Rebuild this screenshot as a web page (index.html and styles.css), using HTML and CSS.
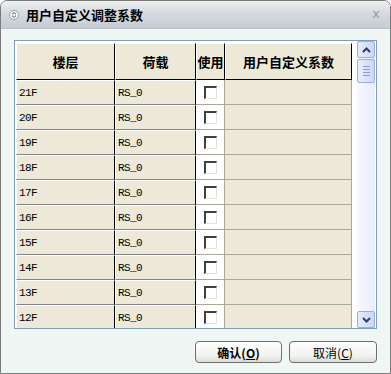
FILE: index.html
```html
<!DOCTYPE html>
<html lang="zh-CN">
<head>
    <meta charset="UTF-8">
    <title>用户自定义调整系数</title>
    <link rel="stylesheet" href="styles.css">
</head>
<body>
    <div class="dialog">
        <div class="title-bar">
            <svg class="title-icon" width="10" height="10" viewBox="0 0 10 10">
                <circle cx="5" cy="5" r="4.5" fill="#f4f6f8" stroke="#9aa2aa"/>
                <path d="M3 4.3 L5 2.5 L7 4.3 M3 5.7 L5 7.5 L7 5.7" fill="none" stroke="#555" stroke-width="1"/>
            </svg>
            <span class="title-text">用户自定义调整系数</span>
            <span class="close-btn">x</span>
        </div>

        <div class="content">
            <div class="grid-box">
                <div class="grid-scroll">
                    <div class="grid">
                        <div class="hd">楼层</div>
                        <div class="hd">荷载</div>
                        <div class="hd">使用</div>
                        <div class="hd">用户自定义系数</div>
                    </div>
                    <div class="grid rows" id="rows"></div>
                </div>
                <div class="scrollbar">
                    <div class="sb-btn">
                        <svg width="9" height="6" viewBox="0 0 9 6"><path d="M1 5 L4.5 1.5 L8 5" fill="none" stroke="#2b3f6e" stroke-width="2"/></svg>
                    </div>
                    <div class="sb-thumb">
                        <span></span><span></span><span></span><span></span>
                    </div>
                    <div class="sb-track"></div>
                    <div class="sb-btn">
                        <svg width="9" height="6" viewBox="0 0 9 6"><path d="M1 1 L4.5 4.5 L8 1" fill="none" stroke="#2b3f6e" stroke-width="2"/></svg>
                    </div>
                </div>
            </div>

            <div class="actions">
                <button class="btn btn-ok">确认(<u>O</u>)</button>
                <button class="btn">取消(<u>C</u>)</button>
            </div>
        </div>
    </div>

    <script>
        // floors 21F down to 12F
        const rows = document.getElementById('rows');
        for (let f = 21; f >= 12; f--) {
            rows.insertAdjacentHTML('beforeend',
                '<div class="cell c-floor">' + f + 'F</div>' +
                '<div class="cell c-load">RS_0</div>' +
                '<div class="cell c-use"><span class="check"></span></div>' +
                '<div class="cell c-coef"></div>');
        }
    </script>
</body>
</html>
```

FILE: styles.css
```css
body {
    margin: 0;
    font-family: "Noto Sans CJK SC", sans-serif;
    font-size: 12px;
    background: #ffffff;
}

.dialog {
    width: 391px;
    height: 374px;
    box-sizing: border-box;
    border: 1px solid #7c7c7c;
    border-radius: 7px 7px 0 0;
    background: #eff6f4;
    overflow: hidden;
}

.title-bar {
    height: 28px;
    display: flex;
    align-items: center;
    padding: 0 8px 0 8px;
    background: linear-gradient(#eef0f2, #d5dae0 45%, #c6ccd3);
    border-bottom: 1px solid #b9c0c7;
    box-sizing: border-box;
}

.title-icon {
    margin-right: 7px;
    margin-top: 1px;
}

.title-text {
    font-weight: bold;
    font-size: 13px;
    color: #000;
    flex: 1;
}

.close-btn {
    font-family: "DejaVu Sans", sans-serif;
    font-size: 13px;
    color: #9a9a9a;
    margin-right: 2px;
    margin-top: -2px;
}

.content {
    padding: 11px 13px 0 13px;
}

.grid-box {
    height: 289px;
    box-sizing: border-box;
    border: 1px solid #7f9db9;
    display: flex;
    background: #ffffff;
    padding: 2px 1px 0 1px;
}

.grid-scroll {
    width: 341px;
    overflow: hidden;
}

.grid {
    display: grid;
    grid-template-columns: 99px 81px 29px 127px;
}

.hd {
    height: 37px;
    box-sizing: border-box;
    background: #ece9d8;
    border-top: 1px solid #fff;
    border-left: 1px solid #fff;
    border-right: 1px solid #000;
    border-bottom: 1px solid #000;
    font-weight: bold;
    font-size: 13px;
    display: flex;
    align-items: center;
    justify-content: center;
    white-space: nowrap;
}

.cell {
    height: 25px;
    box-sizing: border-box;
    background: #ece9d8;
    display: flex;
    align-items: center;
    font-family: "Liberation Mono", monospace;
    font-size: 11px;
    letter-spacing: -0.6px;
    color: #000;
    padding-left: 2px;
}

.c-floor,
.c-load {
    border-top: 1px solid #fff;
    border-left: 1px solid #fff;
    border-right: 1px solid #000;
    border-bottom: 1px solid #848284;
}

.c-use {
    background: #ffffff;
    border-right: 1px solid #aca899;
    border-bottom: 1px solid #aca899;
    padding-left: 8px;
}

.c-coef {
    border-right: 1px solid #aca899;
    border-bottom: 1px solid #aca899;
}

.check {
    width: 13px;
    height: 13px;
    box-sizing: border-box;
    border-top: 2px solid #404040;
    border-left: 2px solid #404040;
    border-right: 1px solid #e4e2d8;
    border-bottom: 1px solid #e4e2d8;
    background: #fff;
}

.scrollbar {
    width: 18px;
    margin-left: 4px;
    display: flex;
    flex-direction: column;
    background: linear-gradient(90deg, #f6f8ff, #e9ecfb);
    margin-top: -2px;
}

.sb-btn {
    height: 17px;
    box-sizing: border-box;
    border: 1px solid #9caee0;
    border-radius: 2px;
    background: linear-gradient(90deg, #e6ecfb, #c9d6f6);
    display: flex;
    align-items: center;
    justify-content: center;
}

.sb-thumb {
    height: 24px;
    margin-top: 1px;
    box-sizing: border-box;
    border: 1px solid #9caee0;
    border-radius: 2px;
    background: linear-gradient(90deg, #eaeffc, #cad6f5);
    display: flex;
    flex-direction: column;
    align-items: center;
    justify-content: center;
    gap: 2px;
}

.sb-thumb span {
    width: 7px;
    height: 1px;
    background: #8c9bc4;
}

.sb-track {
    flex: 1;
}

.actions {
    display: flex;
    justify-content: flex-end;
    gap: 7px;
    margin-top: 12px;
}

.btn {
    width: 88px;
    height: 22px;
    font-family: "Noto Sans CJK SC", sans-serif;
    font-size: 12px;
    border: 1px solid #6f6f6f;
    border-radius: 4px;
    background: linear-gradient(#ffffff, #f1f1ee 70%, #dcdcd6);
    padding: 0;
    color: #000;
}

.btn-ok {
    width: 87px;
    font-weight: bold;
}
```
